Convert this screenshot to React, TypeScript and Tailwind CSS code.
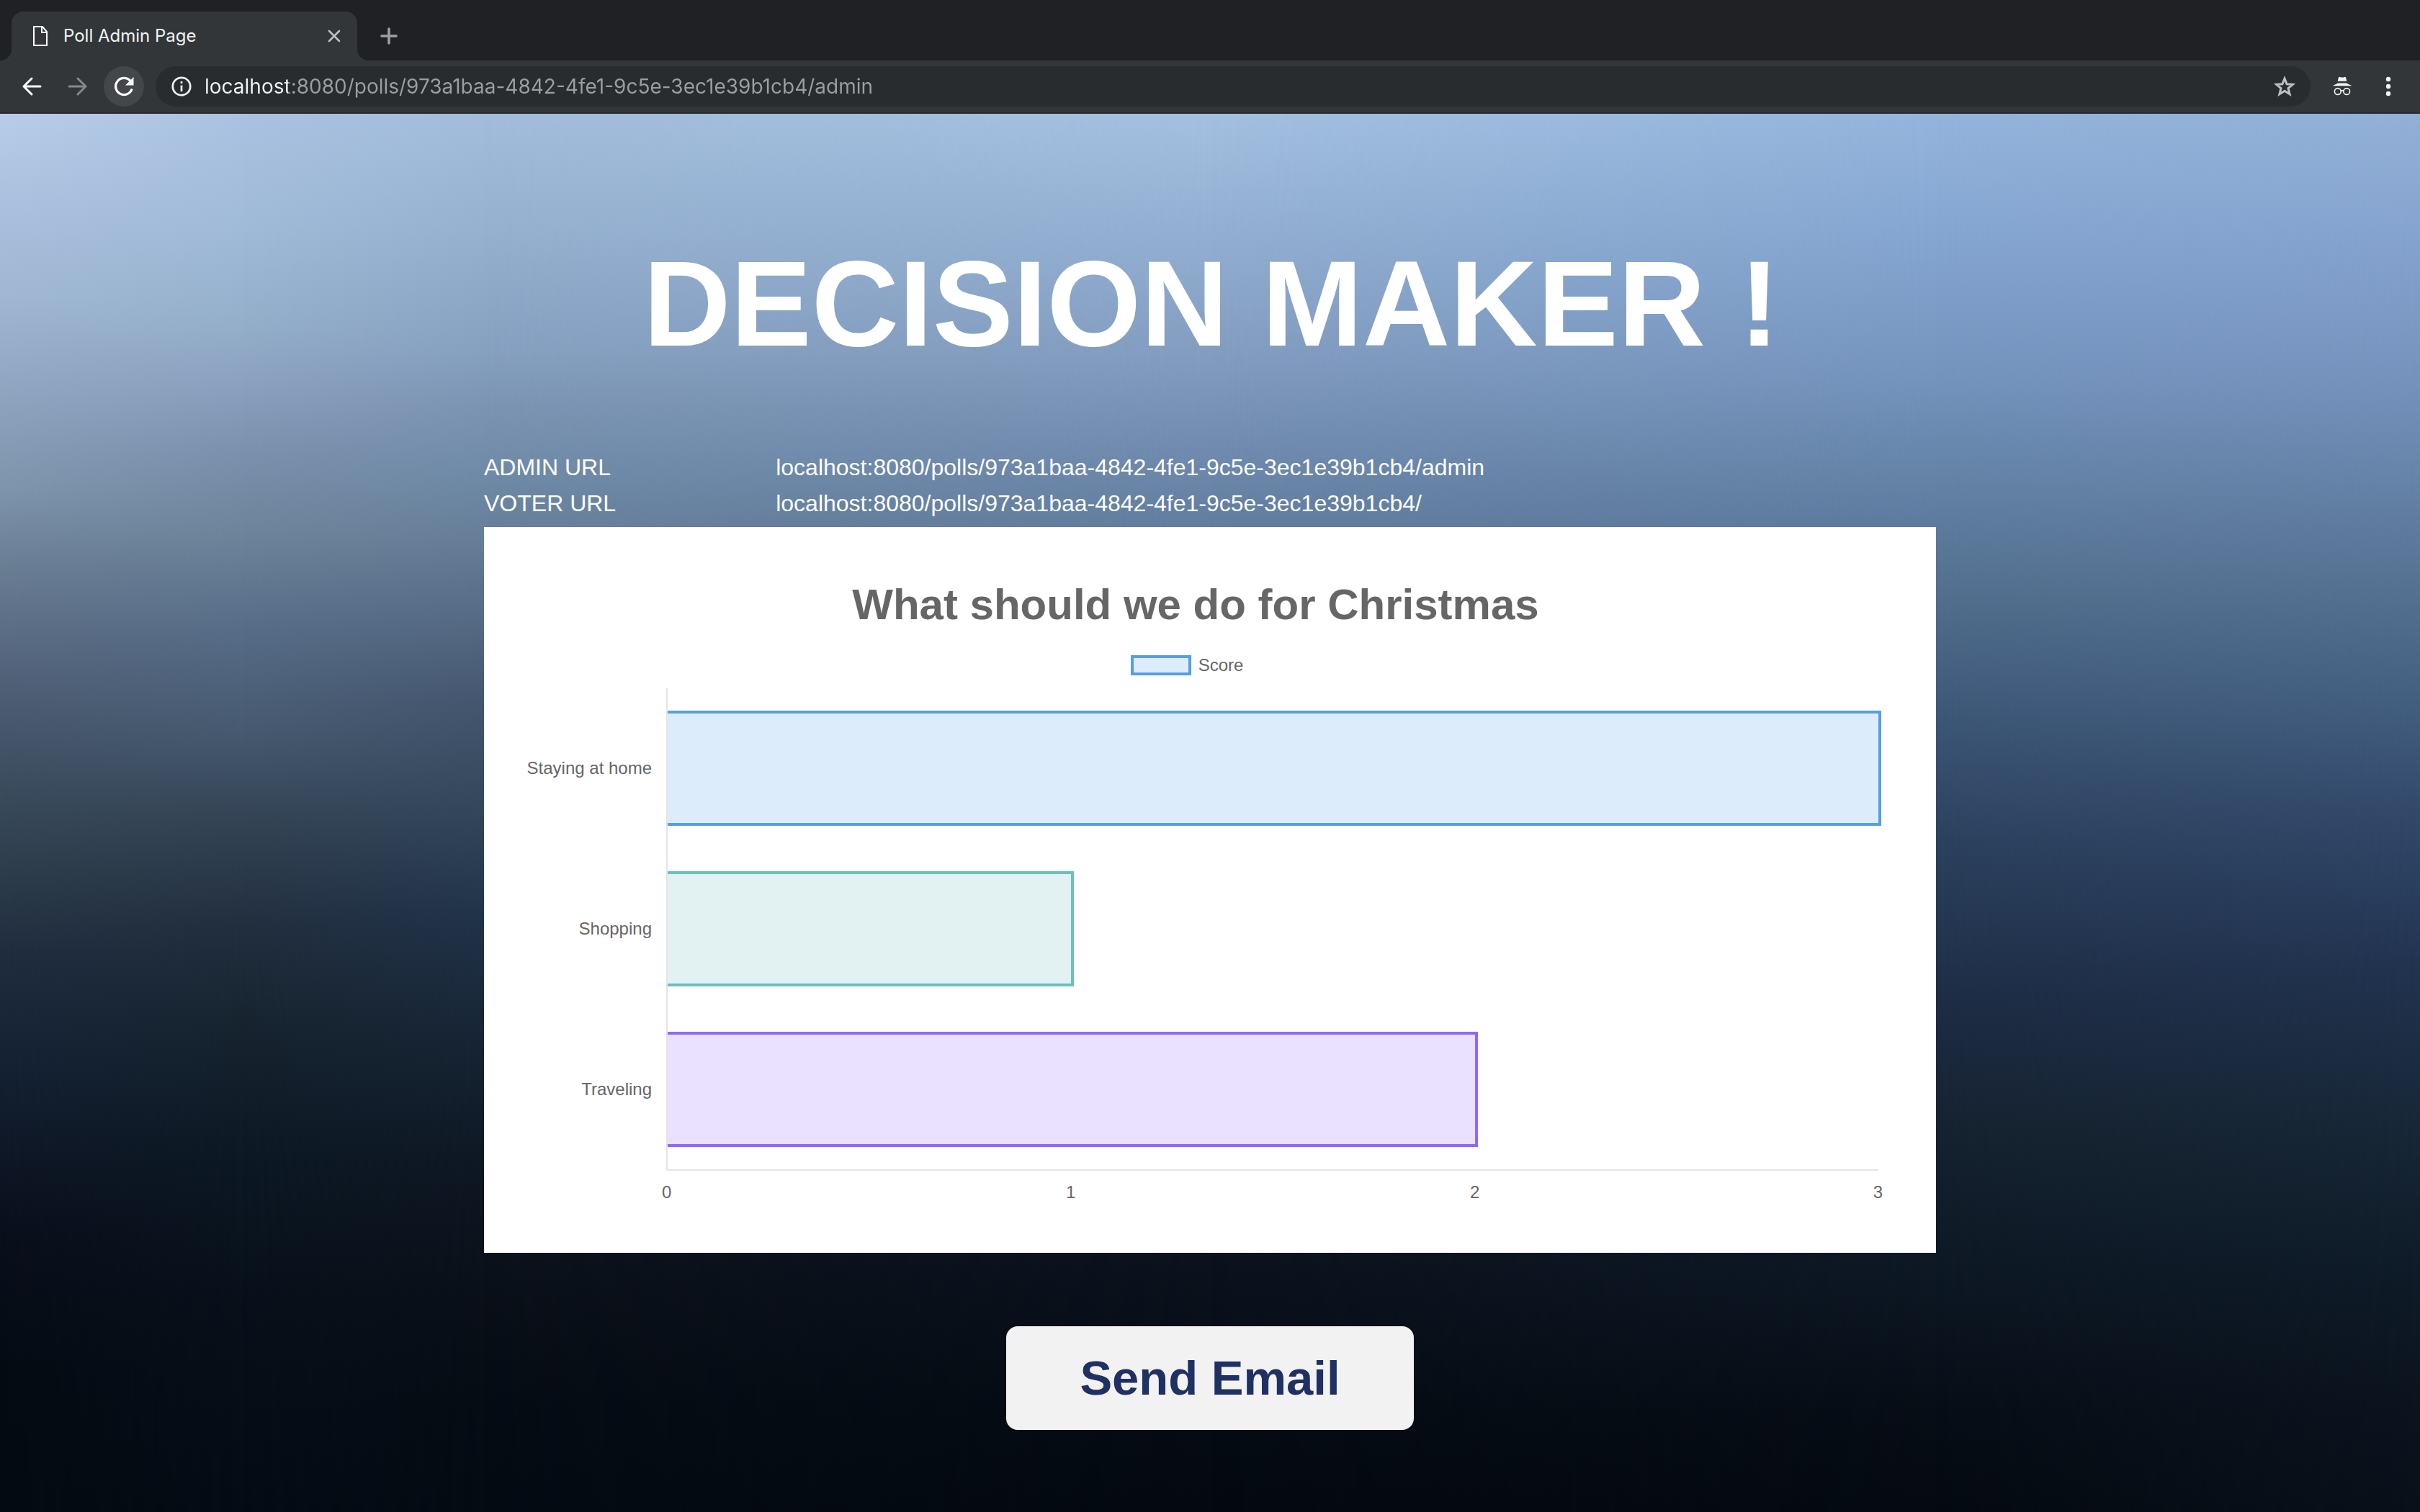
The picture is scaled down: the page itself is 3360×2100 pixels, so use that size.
import type { ReactNode } from "react";

const POLL_URL = "localhost:8080/polls/973a1baa-4842-4fe1-9c5e-3ec1e39b1cb4/";

const MAX_SCORE = 3;

const options = [
  { name: "Staying at home", score: 3, style: "border-[#549fe5] bg-[#549fe5]/20" },
  { name: "Shopping", score: 1, style: "border-[#6cbebf] bg-[#6cbebf]/20" },
  { name: "Traveling", score: 2, style: "border-[#9068f6] bg-[#9068f6]/20" },
];

const links = [
  { label: "ADMIN URL", href: POLL_URL + "admin" },
  { label: "VOTER URL", href: POLL_URL },
];

/* Vertical colour ramps, blended into one another from left to right. */
const skyLayers = [
  "bg-[linear-gradient(to_bottom,#b8cde9_0%,#a8bedc_8%,#a0b8d3_13%,#92a7c3_19%,#7e94ac_27%,#6b7f95_32%,#52627a_40%,#3e4f61_47%,#2b3b49_55%,#202d3f_60%,#142234_68%,#0f1827_74%,#0a0f1c_80%,#050b13_90%,#040b12_100%)]",
  "bg-[linear-gradient(to_bottom,#aac2e1_0%,#a0bbd8_8%,#94afca_15%,#8ba2c0_19%,#7c91ae_24%,#6d849b_30%,#576c87_37%,#44576d_45%,#354556_50%,#222f3f_58%,#172430_65%,#0c1824_75%,#07101a_85%,#040b14_100%)] [mask-image:linear-gradient(to_right,transparent_0%,black_10%)]",
  "bg-[linear-gradient(to_bottom,#a2bddb_0%,#96b1d0_8%,#86a0c0_17%,#7b94b2_21%,#6e8aa6_26%,#677f99_30%,#566b85_36%,#45566f_42%,#33465a_50%,#22344a_57%,#172535_66%,#0e1824_75%,#0a0f18_85%,#050c14_93%,#040b13_100%)] [mask-image:linear-gradient(to_right,transparent_10%,black_20%)]",
  "bg-[linear-gradient(to_bottom,#a3c0e0_0%,#93b0d2_8%,#839dc0_17%,#6d88ac_25%,#5b7896_32%,#3f5877_45%,#2a3d52_56%,#1a273a_68%,#0b121e_82%,#060c14_92%,#04090f_100%)] [mask-image:linear-gradient(to_right,transparent_20%,black_50%)]",
  "bg-[linear-gradient(to_bottom,#94b4dc_0%,#86a7d2_8%,#7493bd_19%,#6483a7_26%,#53708f_34%,#3d5777_43%,#2c415e_52%,#1e2d46_63%,#15222f_73%,#0c1723_84%,#070d16_93%,#050a11_100%)] [mask-image:linear-gradient(to_right,transparent_50%,black_80%)]",
  "bg-[linear-gradient(to_bottom,#92b0d6_0%,#86a4cf_8%,#7592bd_19%,#6683a9_26%,#557191_34%,#435f80_42%,#32496a_50%,#223350_61%,#182838_72%,#0f1c29_82%,#0b141f_92%,#08101a_100%)] [mask-image:linear-gradient(to_right,transparent_80%,black_100%)]",
];

function IconButton({ label, className, children }: { label: string; className: string; children: ReactNode }) {
  return (
    <button type="button" aria-label={label} className={`flex shrink-0 items-center justify-center ${className}`}>
      {children}
    </button>
  );
}

function TabStrip() {
  return (
    <div className="flex h-[84px] items-end bg-[#202124]">
      <div className="h-4 w-4 bg-[radial-gradient(circle_at_top_left,transparent_16px,#323639_16px)]" />
      <div className="flex h-[68px] w-[480px] items-center rounded-t-2xl bg-[#323639] pr-4 pl-7">
        <svg viewBox="0 0 24 30" className="h-[30px] w-6" fill="none" stroke="#fff" strokeWidth="2">
          <path d="M3 2h12l6 7v19H3zM14 2v8h7" />
        </svg>
        <span className="flex-1 pl-5 text-2xl text-[#f1f3f4]">Poll Admin Page</span>
        <IconButton label="Close tab" className="h-8 w-8">
          <svg viewBox="0 0 20 20" className="h-5 w-5" stroke="#bdc1c4" strokeWidth="2.6" strokeLinecap="round">
            <path d="M3 3l14 14M17 3L3 17" />
          </svg>
        </IconButton>
      </div>
      <div className="h-4 w-4 bg-[radial-gradient(circle_at_top_right,transparent_16px,#323639_16px)]" />
      <IconButton label="New tab" className="h-[68px] w-14">
        <svg viewBox="0 0 24 24" className="h-6 w-6" stroke="#9aa0a4" strokeWidth="3.6" strokeLinecap="round">
          <path d="M12 2v20M2 12h20" />
        </svg>
      </IconButton>
    </div>
  );
}

function Toolbar() {
  return (
    <div className="flex h-[74px] items-center border-b-2 border-[#27292b] bg-[#323639] pr-5 pl-4">
      <IconButton label="Back" className="h-14 w-14">
        <svg viewBox="0 0 28 28" className="h-7 w-7" fill="none" stroke="#fff" strokeWidth="3" strokeLinecap="round" strokeLinejoin="round">
          <path d="M26 14H3M14 3L3 14l11 11" />
        </svg>
      </IconButton>
      <IconButton label="Forward" className="mx-2 h-14 w-14">
        <svg viewBox="0 0 28 28" className="h-7 w-7" fill="none" stroke="#85898c" strokeWidth="3" strokeLinecap="round" strokeLinejoin="round">
          <path d="M2 14h23M14 3l11 11-11 11" />
        </svg>
      </IconButton>
      <IconButton label="Reload" className="h-14 w-14 rounded-full bg-[#444749]">
        <svg viewBox="0 0 28 28" className="h-7 w-7" fill="none">
          <path d="M25.2 17.6A11.6 11.6 0 1 1 23 6.4" stroke="#fff" strokeWidth="3.2" />
          <path d="M27.5 1v11.5H16z" fill="#fff" />
        </svg>
      </IconButton>
      <div className="ml-4 flex h-14 flex-1 items-center rounded-full bg-[#282c2f] pr-5 pl-[22px]">
        <svg viewBox="0 0 28 28" className="h-7 w-7 shrink-0" fill="none" stroke="#eef0f1" strokeWidth="2.8">
          <circle cx="14" cy="14" r="12.2" />
          <path d="M14 12.6V21M14 7v3" />
        </svg>
        <input
          aria-label="Address"
          readOnly
          value={POLL_URL + "admin"}
          className="min-w-0 flex-1 bg-[linear-gradient(to_right,#f4f5f6_134px,#9b9fa2_134px)] bg-clip-text pl-[18px] text-[28px] text-transparent outline-none"
        />
        <IconButton label="Bookmark this page" className="h-8 w-8">
          <svg viewBox="0 0 32 32" className="h-8 w-8" fill="none" stroke="#bcc0c3" strokeWidth="3">
            <path d="M16 5l3.1 7.7 8.3.6-6.4 5.3 2.1 8.1L16 22.3l-7.1 4.4 2.1-8.1-6.4-5.3 8.3-.6z" />
          </svg>
        </IconButton>
      </div>
      <IconButton label="Incognito" className="ml-5 h-12 w-12">
        <svg viewBox="0 0 28 28" className="h-7 w-7" fill="none">
          <path d="M9 1.6q.6-1.200 1.800-.7Q14 2.300 17.200.9q1.200-.5 1.800.7L20.300 6.800H7.700z" fill="#f4f5f3" />
          <path d="M8 9.500h12l7.500 3.800H.5z" fill="#f4f5f3" />
          <circle cx="7.800" cy="21" r="4.400" stroke="#f4f5f3" strokeWidth="1.600" />
          <circle cx="20.200" cy="21" r="4.400" stroke="#f4f5f3" strokeWidth="1.600" />
          <path d="M12 20.500q2-1.200 4 0" stroke="#f4f5f3" strokeWidth="1.600" />
        </svg>
      </IconButton>
      <IconButton label="Menu" className="ml-4 h-12 w-12">
        <svg viewBox="0 0 28 28" className="h-7 w-7" fill="#f4f5f3">
          <circle cx="14" cy="4" r="3.200" />
          <circle cx="14" cy="14" r="3.200" />
          <circle cx="14" cy="24" r="3.200" />
        </svg>
      </IconButton>
    </div>
  );
}

function ResultsChart() {
  return (
    <section className="flex flex-col bg-white pt-[72px] pb-[70px] text-2xl leading-7 text-[#666]">
      <h2 className="mr-10 text-center text-[60px] leading-[72px] font-bold">What should we do for Christmas</h2>
      <div className="mt-[34px] mr-16 flex items-center justify-center gap-2.5">
        <span className="h-7 w-[84px] border-4 border-[#549fe5] bg-[#549fe5]/20" />
        Score
      </div>
      <div className="mt-[18px] grid grid-cols-[253px_1fr] pr-20">
        <div className="flex h-[670px] flex-col pr-5 pb-0.5 text-right">
          {options.map((o) => (
            <div key={o.name} className="flex flex-1 items-center justify-end">
              {o.name}
            </div>
          ))}
        </div>
        <div className="flex flex-col border-b-2 border-l-2 border-[#e5e5e5]">
          {options.map((o) => (
            <div key={o.name} className="flex flex-1 items-center">
              <div
                className={`box-content h-[152px] shrink-0 border-y-4 border-r-4 ${o.style}`}
                style={{ width: `${(o.score / MAX_SCORE) * 100}%` }}
              />
            </div>
          ))}
        </div>
        <div className="col-start-2 mt-4 grid grid-cols-3">
          {[0, 1, 2].map((n) => (
            <div key={n} className="flex justify-between">
              <span className="-ml-1.5">{n}</span>
              {n === 2 && <span className="-mr-1.5">{MAX_SCORE}</span>}
            </div>
          ))}
        </div>
      </div>
    </section>
  );
}

export default function App() {
  return (
    <div className="flex min-h-screen flex-col font-[Inter,Roboto,sans-serif]">
      <header>
        <TabStrip />
        <Toolbar />
      </header>
      <main className="relative isolate flex flex-1 flex-col items-center font-['Liberation_Sans',Arial,sans-serif]">
        {skyLayers.map((layer) => (
          <div key={layer} aria-hidden="true" className={`absolute inset-0 -z-10 ${layer}`} />
        ))}
        <h1 className="mt-[168px] pl-1 text-center text-[168px] leading-[192px] font-bold text-white">DECISION MAKER !</h1>
        <div className="mt-[106px] w-3/5">
          <table className="mb-2 w-full table-fixed text-[32px] leading-[50px] text-white">
            <tbody>
              {links.map((l) => (
                <tr key={l.label}>
                  <th scope="row" className="w-1/5 p-0 text-left font-normal">
                    {l.label}
                  </th>
                  <td className="py-0 pr-0 pl-0.5">
                    <a href={"http://" + l.href}>{l.href}</a>
                  </td>
                </tr>
              ))}
            </tbody>
          </table>
          <ResultsChart />
        </div>
        <button
          type="button"
          className="mt-[102px] h-36 rounded-2xl bg-[#f2f2f2] px-[102px] text-[67px] font-bold text-[#1f3163]"
        >
          Send Email
        </button>
      </main>
    </div>
  );
}
